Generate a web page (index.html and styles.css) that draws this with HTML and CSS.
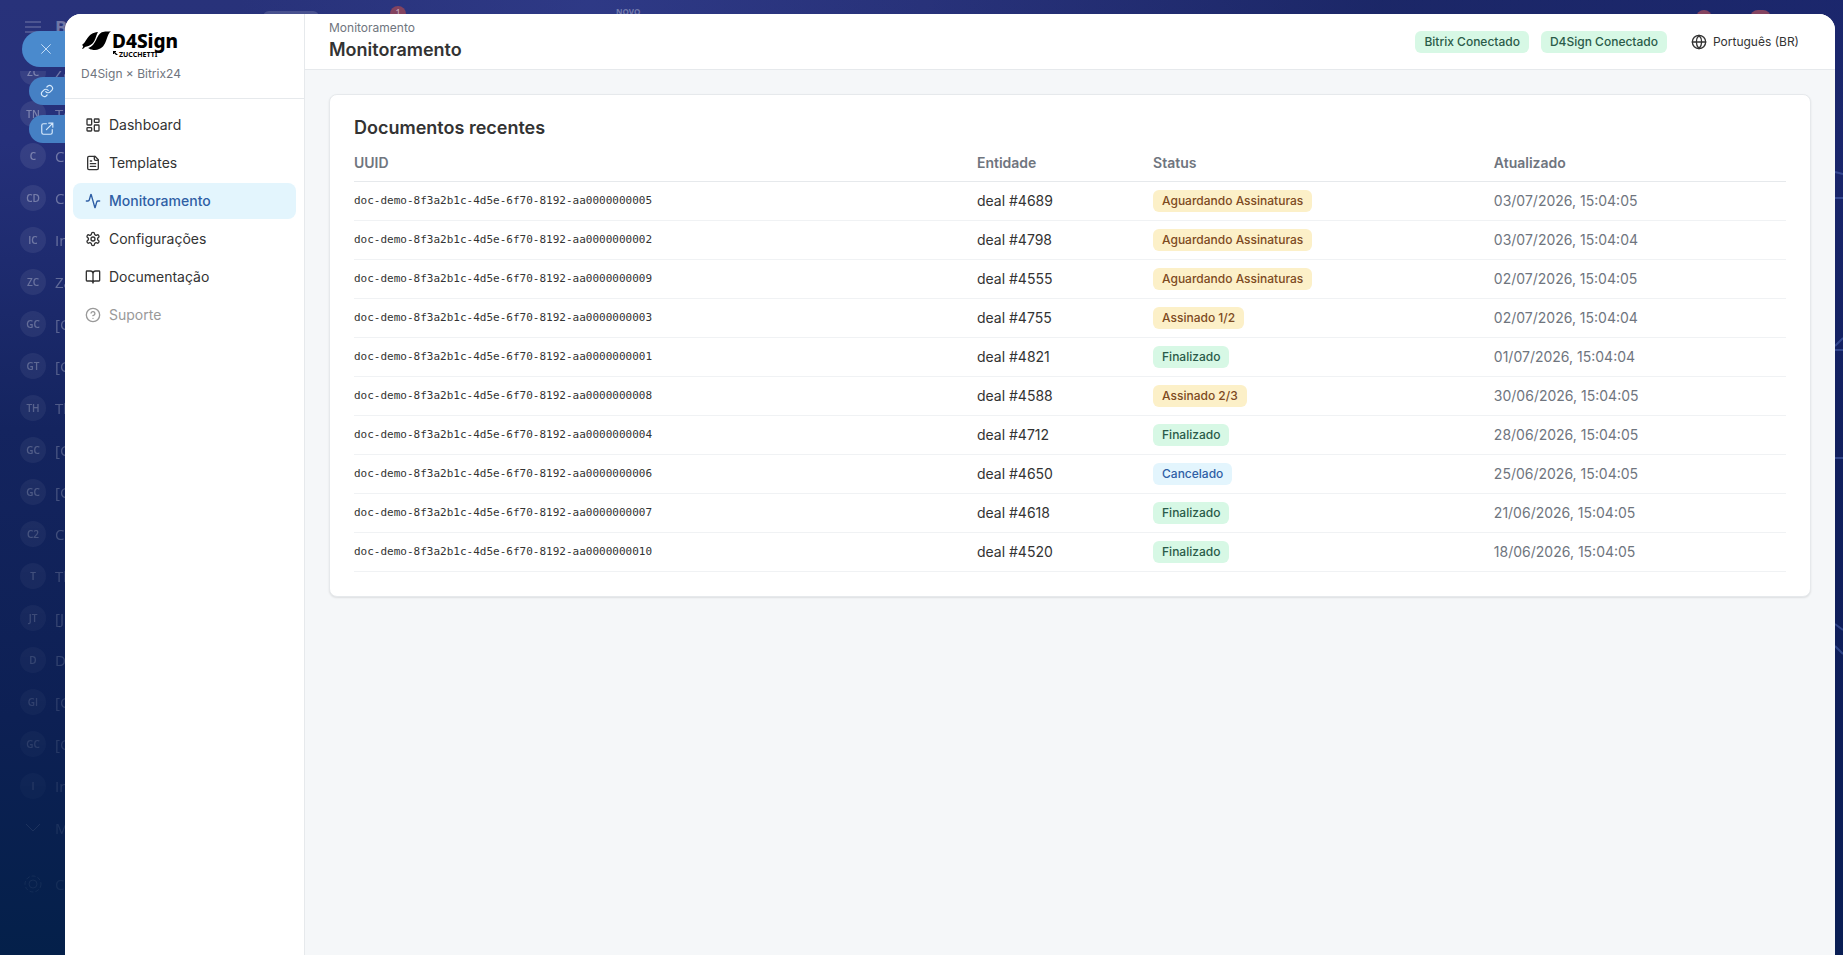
FILE: index.html
```html
<!DOCTYPE html>
<html lang="pt-BR">
<head>
    <meta charset="UTF-8">
    <meta name="viewport" content="width=device-width, initial-scale=1.0">
    <title>Monitoramento</title>
    <link rel="stylesheet" href="styles.css">
</head>
<body>
    <!-- Page behind the slider -->
    <div class="backdrop">
        <svg class="waves" viewBox="0 0 8 600"><path d="M0 172l8 2M0 198h8M0 346l8-8M0 350h8M0 458h8M0 624l8 6M0 646l8 8"/></svg>
        <div class="portal-top">
            <svg class="burger" viewBox="0 0 16 14"><path d="M0 2h16M0 7h16M0 12h16"/></svg>
            <span class="portal-name">B</span>
        </div>
        <div class="portal-list">
            <div class="portal-row"><span class="avatar">ZC</span>Za</div>
            <div class="portal-row"><span class="avatar">TN</span>Te</div>
            <div class="portal-row"><span class="avatar">C</span>C</div>
            <div class="portal-row"><span class="avatar">CD</span>C</div>
            <div class="portal-row"><span class="avatar">IC</span>In</div>
            <div class="portal-row"><span class="avatar">ZC</span>Za</div>
            <div class="portal-row"><span class="avatar">GC</span>[G</div>
            <div class="portal-row"><span class="avatar">GT</span>[G</div>
            <div class="portal-row"><span class="avatar">TH</span>Th</div>
            <div class="portal-row"><span class="avatar">GC</span>[G</div>
            <div class="portal-row"><span class="avatar">GC</span>[G</div>
            <div class="portal-row"><span class="avatar">C2</span>C</div>
            <div class="portal-row"><span class="avatar">T</span>Th</div>
            <div class="portal-row"><span class="avatar">JT</span>[J</div>
            <div class="portal-row"><span class="avatar">D</span>D</div>
            <div class="portal-row"><span class="avatar">GI</span>[G</div>
            <div class="portal-row"><span class="avatar">GC</span>[G</div>
            <div class="portal-row"><span class="avatar">I</span>In</div>
            <div class="portal-row">
                <svg class="row-icon" viewBox="0 0 26 26"><path d="M6 9l7 7 7-7"/></svg>M
            </div>
            <div class="portal-row portal-settings">
                <svg class="row-icon" viewBox="0 0 26 26"><circle cx="13" cy="13" r="4"/><circle cx="13" cy="13" r="8" stroke-dasharray="4 2"/></svg>C
            </div>
        </div>
        <span class="top-search"></span>
        <span class="top-dot dot-count">1</span>
        <span class="top-new">NOVO</span>
        <span class="top-dot dot-bell"></span>
        <span class="top-dot dot-user"></span>
    </div>

    <div class="slider-actions">
        <button class="slider-btn slider-close" aria-label="Fechar">
            <svg viewBox="0 0 16 16"><path d="M3 3l10 10M13 3L3 13"/></svg>
        </button>
        <button class="slider-btn" aria-label="Copiar link">
            <svg viewBox="0 0 24 24"><path d="M10 13a5 5 0 0 0 7.5.5l3-3a5 5 0 0 0-7-7l-1.700 1.700M14 11a5 5 0 0 0-7.500-.5l-3 3a5 5 0 0 0 7 7l1.700-1.700"/></svg>
        </button>
        <button class="slider-btn" aria-label="Abrir em nova aba">
            <svg viewBox="0 0 24 24"><path d="M11 3H6a3 3 0 0 0-3 3v12a3 3 0 0 0 3 3h12a3 3 0 0 0 3-3v-5M15 2h7v7M22 2L11 13"/></svg>
        </button>
    </div>

    <div class="app">
        <aside class="sidebar">
            <div class="brand">
                <svg class="logo" viewBox="0 0 100 28" role="img" aria-label="D4Sign by Zucchetti">
                    <path d="M1 15C6 12 6 3 17 2C14 7 15 15 4 17C3 18 2 19 1 19C2 17 3 16 1 15Z"/>
                    <path d="M7 18C16 16 15 3 22 2C25 1 28 2 30 1C24 6 27 19 14 20C10 20 9 19 7 18Z"/>
                    <path d="M32 21h3v1h-1l3 3h-2l-2-2v1h-1z"/>
                    <text class="logo-name" x="31" y="18">D4Sign</text>
                    <text class="logo-sub" x="38" y="27">ZUCCHETTI</text>
                </svg>
                <div class="brand-sub">D4Sign × Bitrix24</div>
            </div>
            <nav class="nav">
                <a class="nav-item" href="#">
                    <svg class="icon" viewBox="0 0 24 24"><rect x="3" y="3" width="7" height="9" rx="1"/><rect x="14" y="3" width="7" height="5" rx="1"/><rect x="14" y="12" width="7" height="9" rx="1"/><rect x="3" y="16" width="7" height="5" rx="1"/></svg>
                    Dashboard
                </a>
                <a class="nav-item" href="#">
                    <svg class="icon" viewBox="0 0 24 24"><path d="M15 2H6a2 2 0 0 0-2 2v16a2 2 0 0 0 2 2h12a2 2 0 0 0 2-2V7Z"/><path d="M14 2v4a2 2 0 0 0 2 2h4M10 9H8M16 13H8M16 17H8"/></svg>
                    Templates
                </a>
                <a class="nav-item active" href="#">
                    <svg class="icon" viewBox="0 0 24 24"><path d="M22 12h-2.480a2 2 0 0 0-1.930 1.460l-2.350 8.360a.25.25 0 0 1-.48 0L9.240 2.180a.25.25 0 0 0-.48 0l-2.350 8.360A2 2 0 0 1 4.490 12H2"/></svg>
                    Monitoramento
                </a>
                <a class="nav-item" href="#">
                    <svg class="icon" viewBox="0 0 24 24"><path d="M12.220 2h-.44a2 2 0 0 0-2 2v.18a2 2 0 0 1-1 1.730l-.43.25a2 2 0 0 1-2 0l-.15-.08a2 2 0 0 0-2.730.73l-.22.38a2 2 0 0 0 .73 2.730l.15.1a2 2 0 0 1 1 1.720v.51a2 2 0 0 1-1 1.740l-.15.09a2 2 0 0 0-.73 2.730l.22.38a2 2 0 0 0 2.730.73l.15-.08a2 2 0 0 1 2 0l.43.25a2 2 0 0 1 1 1.730V20a2 2 0 0 0 2 2h.44a2 2 0 0 0 2-2v-.18a2 2 0 0 1 1-1.730l.43-.25a2 2 0 0 1 2 0l.15.08a2 2 0 0 0 2.730-.73l.22-.39a2 2 0 0 0-.73-2.730l-.15-.08a2 2 0 0 1-1-1.740v-.5a2 2 0 0 1 1-1.740l.15-.09a2 2 0 0 0 .73-2.730l-.22-.38a2 2 0 0 0-2.730-.73l-.15.08a2 2 0 0 1-2 0l-.43-.25a2 2 0 0 1-1-1.730V4a2 2 0 0 0-2-2z"/><circle cx="12" cy="12" r="3"/></svg>
                    Configurações
                </a>
                <a class="nav-item" href="#">
                    <svg class="icon" viewBox="0 0 24 24"><path d="M12 7v14M3 18a1 1 0 0 1-1-1V4a1 1 0 0 1 1-1h5a4 4 0 0 1 4 4 4 4 0 0 1 4-4h5a1 1 0 0 1 1 1v13a1 1 0 0 1-1 1h-6a3 3 0 0 0-3 3 3 3 0 0 0-3-3z"/></svg>
                    Documentação
                </a>
                <a class="nav-item disabled" aria-disabled="true">
                    <svg class="icon" viewBox="0 0 24 24"><circle cx="12" cy="12" r="10"/><path d="M9.090 9a3 3 0 0 1 5.830 1c0 2-3 3-3 3M12 17h.01"/></svg>
                    Suporte
                </a>
            </nav>
        </aside>

        <div class="main">
            <header class="topbar">
                <div>
                    <div class="crumb">Monitoramento</div>
                    <h1>Monitoramento</h1>
                </div>
                <div class="topbar-right">
                    <span class="badge green">Bitrix Conectado</span>
                    <span class="badge green">D4Sign Conectado</span>
                    <button class="lang">
                        <svg class="icon" viewBox="0 0 24 24"><circle cx="12" cy="12" r="10"/><path d="M12 2a14.500 14.500 0 0 0 0 20 14.500 14.500 0 0 0 0-20M2 12h20"/></svg>
                        Português (BR)
                    </button>
                </div>
            </header>

            <main class="content">
                <section class="card">
                    <h2>Documentos recentes</h2>
                    <table>
                        <thead>
                            <tr>
                                <th class="col-uuid">UUID</th>
                                <th class="col-entity">Entidade</th>
                                <th class="col-status">Status</th>
                                <th>Atualizado</th>
                            </tr>
                        </thead>
                        <tbody>
                            <tr>
                                <td class="uuid">doc-demo-8f3a2b1c-4d5e-6f70-8192-aa0000000005</td>
                                <td>deal #4689</td>
                                <td><span class="badge yellow">Aguardando Assinaturas</span></td>
                                <td class="date">03/07/2026, 15:04:05</td>
                            </tr>
                            <tr>
                                <td class="uuid">doc-demo-8f3a2b1c-4d5e-6f70-8192-aa0000000002</td>
                                <td>deal #4798</td>
                                <td><span class="badge yellow">Aguardando Assinaturas</span></td>
                                <td class="date">03/07/2026, 15:04:04</td>
                            </tr>
                            <tr>
                                <td class="uuid">doc-demo-8f3a2b1c-4d5e-6f70-8192-aa0000000009</td>
                                <td>deal #4555</td>
                                <td><span class="badge yellow">Aguardando Assinaturas</span></td>
                                <td class="date">02/07/2026, 15:04:05</td>
                            </tr>
                            <tr>
                                <td class="uuid">doc-demo-8f3a2b1c-4d5e-6f70-8192-aa0000000003</td>
                                <td>deal #4755</td>
                                <td><span class="badge yellow">Assinado 1/2</span></td>
                                <td class="date">02/07/2026, 15:04:04</td>
                            </tr>
                            <tr>
                                <td class="uuid">doc-demo-8f3a2b1c-4d5e-6f70-8192-aa0000000001</td>
                                <td>deal #4821</td>
                                <td><span class="badge green">Finalizado</span></td>
                                <td class="date">01/07/2026, 15:04:04</td>
                            </tr>
                            <tr>
                                <td class="uuid">doc-demo-8f3a2b1c-4d5e-6f70-8192-aa0000000008</td>
                                <td>deal #4588</td>
                                <td><span class="badge yellow">Assinado 2/3</span></td>
                                <td class="date">30/06/2026, 15:04:05</td>
                            </tr>
                            <tr>
                                <td class="uuid">doc-demo-8f3a2b1c-4d5e-6f70-8192-aa0000000004</td>
                                <td>deal #4712</td>
                                <td><span class="badge green">Finalizado</span></td>
                                <td class="date">28/06/2026, 15:04:05</td>
                            </tr>
                            <tr>
                                <td class="uuid">doc-demo-8f3a2b1c-4d5e-6f70-8192-aa0000000006</td>
                                <td>deal #4650</td>
                                <td><span class="badge blue">Cancelado</span></td>
                                <td class="date">25/06/2026, 15:04:05</td>
                            </tr>
                            <tr>
                                <td class="uuid">doc-demo-8f3a2b1c-4d5e-6f70-8192-aa0000000007</td>
                                <td>deal #4618</td>
                                <td><span class="badge green">Finalizado</span></td>
                                <td class="date">21/06/2026, 15:04:05</td>
                            </tr>
                            <tr>
                                <td class="uuid">doc-demo-8f3a2b1c-4d5e-6f70-8192-aa0000000010</td>
                                <td>deal #4520</td>
                                <td><span class="badge green">Finalizado</span></td>
                                <td class="date">18/06/2026, 15:04:05</td>
                            </tr>
                        </tbody>
                    </table>
                </section>
            </main>
        </div>
    </div>
</body>
</html>
```
FILE: styles.css
```css
* {
    box-sizing: border-box;
}

body {
    margin: 0;
    height: 100vh;
    overflow: hidden;
    position: relative;
    font-family: Inter, "Liberation Sans", sans-serif;
    font-size: 14px;
    line-height: 20px;
    color: #333;
    background: linear-gradient(180deg, #28327a 0%, #25307a 15%, #14245f 45%, #0d2054 75%, #04204a 100%);
}

h1,
h2 {
    margin: 0;
    font-size: 18px;
    font-weight: 600;
}

svg {
    display: block;
}

/* page behind the slider */
.backdrop {
    position: absolute;
    inset: 0;
    overflow: hidden;
    font-family: "Open Sans", sans-serif;
    color: rgba(255, 255, 255, 0.35);
    background: linear-gradient(90deg, transparent 13%, rgba(52, 64, 145, 0.5) 32%, transparent 50%, rgba(15, 28, 85, 0.5) 75%, rgba(15, 28, 95, 0.5) 100%);
}

.waves {
    position: absolute;
    top: 0;
    right: 0;
    width: 8px;
    height: 600px;
    overflow: visible;
    fill: none;
    stroke: rgba(110, 140, 220, 0.35);
    stroke-width: 2;
}

.portal-top {
    display: flex;
    align-items: center;
    gap: 14px;
    height: 71px;
    padding: 0 0 18px 25px;
}

.burger {
    width: 16px;
    height: 14px;
    stroke: currentColor;
    fill: none;
}

.portal-name {
    font-size: 18px;
    font-weight: 700;
}

.portal-list {
    width: 240px;
    height: calc(100vh - 71px);
    overflow: hidden;
    display: flex;
    flex-direction: column;
    -webkit-mask-image: linear-gradient(180deg, #000 10%, transparent 108%);
    mask-image: linear-gradient(180deg, #000 10%, transparent 108%);
}

.portal-row {
    display: flex;
    align-items: center;
    flex-shrink: 0;
    gap: 9px;
    height: 42px;
    padding-left: 20px;
    font-size: 15px;
}

.portal-row:first-child {
    margin-top: -20px;
}

.portal-settings {
    margin-top: 14px;
}

.avatar {
    width: 26px;
    height: 26px;
    border-radius: 50%;
    background: rgba(255, 255, 255, 0.08);
    font-size: 10px;
    line-height: 26px;
    font-weight: 600;
    text-align: center;
}

.row-icon {
    width: 26px;
    height: 26px;
    stroke: currentColor;
    fill: none;
}

.top-search,
.top-dot,
.top-new {
    position: absolute;
}

.top-search {
    left: 263px;
    top: 11px;
    width: 56px;
    height: 24px;
    border-radius: 6px;
    background: rgba(255, 255, 255, 0.15);
}

.top-dot {
    top: 10px;
    width: 16px;
    height: 16px;
    border-radius: 8px;
    background: #84435f;
    font-size: 10px;
    line-height: 10px;
    text-align: center;
}

.dot-count {
    left: 390px;
    top: 6px;
    line-height: 14px;
    color: rgba(255, 255, 255, 0.6);
}

.top-new {
    left: 616px;
    top: 7px;
    font-size: 8px;
    line-height: 10px;
    font-weight: 700;
}

.dot-bell {
    right: 131px;
}

.dot-user {
    right: 72px;
    width: 21px;
}

/* tabs on the slider's left edge */
.slider-actions {
    position: absolute;
    left: 0;
    top: 31px;
    width: 65px;
    display: flex;
    flex-direction: column;
    align-items: flex-end;
    gap: 10px;
}

.slider-btn {
    width: 36px;
    height: 28px;
    padding: 0 0 0 11px;
    border: none;
    border-radius: 14px 0 0 14px;
    background: #4580c4;
    cursor: pointer;
}

.slider-btn svg {
    width: 14px;
    height: 14px;
    fill: none;
    stroke: #d5e8fb;
    stroke-width: 2;
    stroke-linecap: round;
}

.slider-close {
    width: 43px;
    height: 36px;
    padding-left: 17px;
    border-radius: 18px 0 0 18px;
    background: #4a8acd;
}

.slider-close svg {
    stroke-width: 1;
}

/* app */
.app {
    position: absolute;
    inset: 14px 8px 0 65px;
    display: flex;
    overflow: hidden;
    border-radius: 16px 16px 0 0;
    background: #f5f7f9;
}

.sidebar {
    width: 240px;
    flex-shrink: 0;
    background: #fff;
    border-right: 1px solid #e6e9ec;
}

.brand {
    display: flex;
    flex-direction: column;
    gap: 6px;
    padding: 16px 16px 14px;
    border-bottom: 1px solid #e6e9ec;
}

.logo {
    width: 100px;
    height: 28px;
    overflow: visible;
    fill: #000;
}

.logo-name {
    font: 800 19px "Noto Sans", sans-serif;
}

.logo-sub {
    font: 700 7px "Noto Sans", sans-serif;
}

.brand-sub {
    font-size: 12px;
    color: #6f757e;
}

.nav {
    display: flex;
    flex-direction: column;
    gap: 2px;
    padding: 8px;
}

.nav-item {
    display: flex;
    align-items: center;
    gap: 8px;
    height: 36px;
    padding: 0 12px;
    border-radius: 8px;
    color: #333;
    text-decoration: none;
}

.nav-item.active {
    background: #e3f5fd;
    color: #2f5fa5;
    font-weight: 500;
}

.nav-item.disabled {
    color: #999;
}

.icon {
    width: 16px;
    height: 16px;
    flex-shrink: 0;
    fill: none;
    stroke: currentColor;
    stroke-width: 2;
    stroke-linecap: round;
    stroke-linejoin: round;
}

.main {
    flex: 1;
    min-width: 0;
}

.topbar {
    display: flex;
    align-items: center;
    justify-content: space-between;
    padding: 6px 24px 5px;
    background: #fff;
    border-bottom: 1px solid #e6e9ec;
}

.crumb {
    font-size: 12px;
    line-height: 16px;
    color: #6f757e;
}

h1 {
    line-height: 28px;
}

.topbar-right {
    display: flex;
    align-items: center;
    gap: 12px;
}

.lang {
    display: flex;
    align-items: center;
    gap: 6px;
    height: 32px;
    padding: 0 12px;
    border: none;
    background: none;
    font: inherit;
    font-size: 12px;
    color: #333;
    cursor: pointer;
}

.badge {
    display: inline-block;
    padding: 0 9px;
    border-radius: 6px;
    font-size: 12px;
    line-height: 22px;
    font-weight: 500;
    white-space: nowrap;
}

.green {
    background: #d7f8e5;
    color: #2a5b49;
}

.yellow {
    background: #fcf0c8;
    color: #7d4a22;
}

.blue {
    background: #e3f5fd;
    color: #2f5fa5;
}

.content {
    padding: 24px;
}

.card {
    padding: 24px;
    border: 1px solid #e6e9ec;
    border-radius: 8px;
    background: #fff;
    box-shadow: 0 1px 2px rgba(0, 0, 0, 0.1);
}

h2 {
    margin-bottom: 8px;
    line-height: 18px;
}

table {
    width: 100%;
    table-layout: fixed;
    border-collapse: separate;
    border-spacing: 0;
}

th {
    padding: 8px 8px 8px 0;
    border-bottom: 1px solid #e6e9ec;
    text-align: left;
    font-weight: 600;
    color: #6f757e;
}

td {
    height: 39px;
    padding: 0 8px 0 0;
    border-bottom: 1px solid #f0f2f4;
    vertical-align: middle;
}

td .badge {
    vertical-align: middle;
}

.col-uuid {
    width: 43.5%;
}

.col-entity {
    width: 12.3%;
}

.col-status {
    width: 23.8%;
}

.uuid {
    font-family: "DejaVu Sans Mono", monospace;
    font-size: 11px;
}

.date {
    color: #6f757e;
}
```
